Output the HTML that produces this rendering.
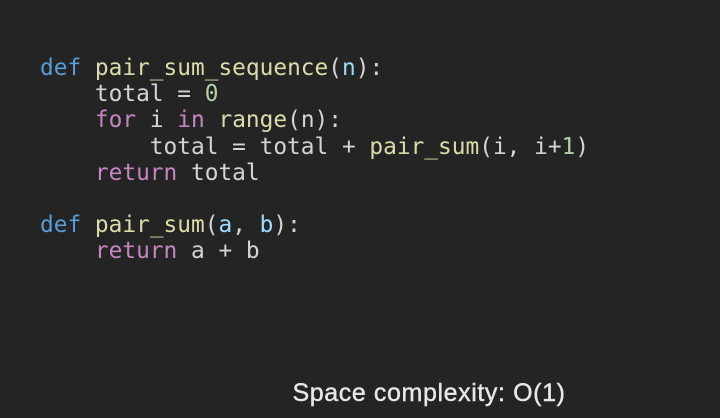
<!DOCTYPE html>
<html><head><style>
html,body{margin:0;padding:0;width:720px;height:418px;background:#242424;overflow:hidden}
pre{position:absolute;left:40px;top:55px;margin:0;font-family:"DejaVu Sans Mono","Liberation Mono",monospace;font-size:22.8px;line-height:26.2px;color:#d4d4d4}
.k{color:#569cd6}.f{color:#dcdcaa}.p{color:#9cdcfe}.c{color:#c586c0}.n{color:#b5cea8}
.cap{position:absolute;left:280px;top:379px;font-family:"Liberation Sans",sans-serif;font-size:25px;letter-spacing:0.6px;color:#e8e8e8;white-space:nowrap;width:298px;text-align:center;-webkit-text-stroke:0.4px #e8e8e8}
</style></head><body>
<pre><span class="k">def</span> <span class="f">pair_sum_sequence</span>(<span class="p">n</span>):
    total = <span class="n">0</span>
    <span class="c">for</span> i <span class="c">in</span> <span class="f">range</span>(n):
        total = total + <span class="f">pair_sum</span>(i, i+<span class="n">1</span>)
    <span class="c">return</span> total

<span class="k">def</span> <span class="f">pair_sum</span>(<span class="p">a</span>, <span class="p">b</span>):
    <span class="c">return</span> a + b</pre>
<div class="cap">Space complexity: O(1)</div>
</body></html>
